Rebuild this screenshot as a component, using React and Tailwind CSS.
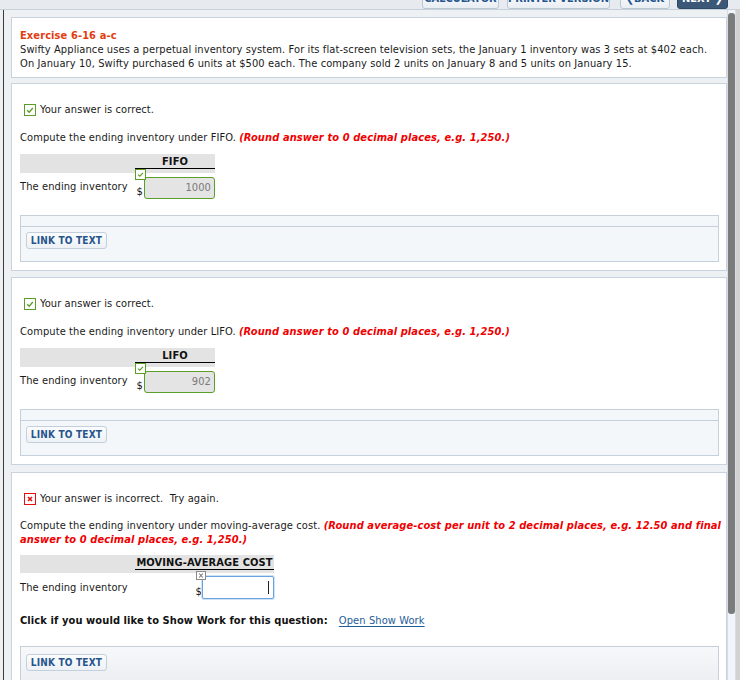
import React from "react";

const FONT = "font-[family-name:'DejaVu_Sans_Condensed','DejaVu_Sans',sans-serif] tracking-[0.1px]";

function StatusOk() {
  return (
    <div className="ml-[4px] flex h-[14px] items-center">
      <span className="flex h-[12px] w-[12px] items-center justify-center border border-[#5a9e28] bg-white">
        <svg width="10" height="10" viewBox="0 0 10 10">
          <path d="M2.2 5.2 L4.2 7.2 L7.8 3" fill="none" stroke="#5a9e28" strokeWidth="1.3" />
        </svg>
      </span>
      <span className="ml-[4px] text-[11px] leading-[14px] text-[#1a1a1a]">Your answer is correct.</span>
    </div>
  );
}

function StatusBad() {
  return (
    <div className="ml-[4px] flex h-[14px] items-center">
      <span className="flex h-[12px] w-[12px] items-center justify-center border border-[#e41010] bg-white">
        <svg width="10" height="10" viewBox="0 0 10 10">
          <path d="M3 3 L7 7 M7 3 L3 7" fill="none" stroke="#e41010" strokeWidth="1.6" />
        </svg>
      </span>
      <span className="ml-[4px] whitespace-pre text-[11px] leading-[14px] text-[#1a1a1a]">Your answer is incorrect.  Try again.</span>
    </div>
  );
}

function LinkButton() {
  return (
    <span className="flex h-[17px] w-[81px] items-center justify-center whitespace-nowrap rounded-[3px] border border-[#c3cfdb] bg-gradient-to-b from-[#fbfcfe] to-[#edf1f5] text-[10px] font-bold tracking-[0.2px] text-[#26548c]">
      LINK TO TEXT
    </span>
  );
}

function LinkBox() {
  return (
    <div className="mt-[16px] mr-[7px] flex flex-col border border-[#c6d0da] bg-[#f4f7fa]">
      <div className="h-[11px] border-b border-[#c6d0da]" />
      <div className="flex h-[34px] items-start pt-[5px] pl-[5px]">
        <LinkButton />
      </div>
    </div>
  );
}

function SmallCheck() {
  return (
    <span className="absolute left-0 top-[-4px] flex h-[11px] w-[11px] items-center justify-center border border-[#5a9e28] bg-white">
      <svg width="9" height="9" viewBox="0 0 9 9">
        <path d="M2 4.6 L3.8 6.2 L7 2.8" fill="none" stroke="#5a9e28" strokeWidth="1.1" />
      </svg>
    </span>
  );
}

function AnswerPanel({ method, value, className }) {
  return (
    <div className={"flex flex-col border border-[#c9d3dd] bg-white pl-[8px] pb-[8px] " + className}>
      <div className="mt-[19px]">
        <StatusOk />
      </div>
      <div className="mt-[14px] whitespace-nowrap text-[11px] leading-[14px] text-[#1a1a1a]">
        Compute the ending inventory under {method}.{" "}
        <span className="font-bold italic text-[#f00000]">(Round answer to 0 decimal places, e.g. 1,250.)</span>
      </div>
      <div className="mt-[9px] flex h-[19px] w-[195px] bg-[#e3e3e3]">
        <div className="w-[115px]" />
        <div className="h-[15px] w-[80px] border-b border-black text-center text-[11px] font-bold leading-[15px] text-[#111]">
          {method}
        </div>
      </div>
      <div className="flex h-[26px] w-[195px]">
        <div className="flex w-[115px] items-center pt-[3px] text-[11px] text-[#1a1a1a]">The ending inventory</div>
        <div className="relative flex w-[80px] items-end justify-end">
          <SmallCheck />
          <span className="mb-[1px] mr-[1px] text-[11px] leading-[12px] text-[#111]">$</span>
          <span className="flex h-[22px] w-[71px] items-center justify-end rounded-[3px] border border-[#5a9e28] bg-[#e4e4e4] pr-[3px] text-[11px] text-[#7a7a7a]">
            {value}
          </span>
        </div>
      </div>
      <LinkBox />
    </div>
  );
}

function TopButton({ children, dark, w }) {
  return (
    <span
      className={
        "flex h-[20px] shrink-0 items-center justify-center whitespace-nowrap rounded-[3px] border text-[11px] font-bold tracking-normal " +
        (dark
          ? "border-[#2f4a66] bg-[#3b5878] text-white "
          : "border-[#b9c7d5] bg-gradient-to-b from-[#ffffff] to-[#e9eef3] text-[#26548c] ") +
        w
      }
    >
      {children}
    </span>
  );
}

export default function App() {
  return (
    <div className={"flex h-[680px] w-[740px] flex-col overflow-hidden bg-[#eef1f4] " + FONT}>
      <div className="flex h-[10px] shrink-0 items-end justify-end gap-[7px] overflow-hidden border-b border-[#c7cfd9] bg-[#e7ebef] pr-[12px]">
        <TopButton w="w-[77px]">CALCULATOR</TopButton>
        <TopButton w="w-[103px] ml-[1px]">PRINTER VERSION</TopButton>
        <TopButton w="w-[50px] ml-[3px]">❮BACK</TopButton>
        <TopButton dark w="w-[51px]">NEXT ❯</TopButton>
      </div>
      <div className="flex min-h-0 flex-1">
        <div className="w-[3px] shrink-0" />
        <div className="w-px shrink-0 bg-[#3a3a3a]" />
        <div className="flex min-w-0 flex-1 flex-col overflow-hidden pl-[7px] pt-[7px]">
          <div className="flex flex-col border border-[#c9d3dd] bg-white px-[8px] pt-[10px] pb-[6px]">
            <div className="text-[11px] font-bold leading-[15px] text-[#e23d10]">Exercise 6-16 a-c</div>
            <div className="whitespace-nowrap text-[11px] leading-[14px] text-[#1a1a1a]">
              Swifty Appliance uses a perpetual inventory system. For its flat-screen television sets, the January 1 inventory was 3 sets at $402 each.
              <br />
              On January 10, Swifty purchased 6 units at $500 each. The company sold 2 units on January 8 and 5 units on January 15.
            </div>
          </div>
          <AnswerPanel method="FIFO" value="1000" className="mt-[5px]" />
          <AnswerPanel method="LIFO" value="902" className="mt-[6px]" />
          <div className="mt-[7px] flex flex-col border border-[#c9d3dd] bg-white pl-[8px]">
            <div className="mt-[19px]">
              <StatusBad />
            </div>
            <div className="mt-[13px] text-[11px] leading-[13.5px] text-[#1a1a1a]">
              <div className="whitespace-nowrap">
                Compute the ending inventory under moving-average cost.{" "}
                <span className="font-bold italic text-[#f00000]">(Round average-cost per unit to 2 decimal places, e.g. 12.50 and final</span>
              </div>
              <div className="whitespace-nowrap font-bold italic text-[#f00000]">answer to 0 decimal places, e.g. 1,250.)</div>
            </div>
            <div className="mt-[9px] flex h-[18px] w-[254px] bg-[#e3e3e3]">
              <div className="w-[115px]" />
              <div className="h-[15px] w-[139px] border-b border-black text-center text-[11px] font-bold leading-[15px] text-[#111]">
                MOVING-AVERAGE COST
              </div>
            </div>
            <div className="flex h-[26px] w-[254px]">
              <div className="flex w-[115px] items-center pt-[4px] text-[11px] text-[#1a1a1a]">The ending inventory</div>
              <div className="flex w-[139px] items-end justify-end">
                <div className="relative flex items-end">
                  <span className="absolute left-0 top-[-5px] flex h-[9px] w-[10px] items-center justify-center border border-[#8a8a8a] bg-white">
                    <svg width="8" height="7" viewBox="0 0 8 7">
                      <path d="M2.2 1.5 L5.8 5.5 M5.8 1.5 L2.2 5.5" fill="none" stroke="#777" strokeWidth="1.1" />
                    </svg>
                  </span>
                  <span className="mb-[1px] text-[11px] leading-[12px] text-[#111]">$</span>
                  <span className="flex h-[23px] w-[72px] items-center justify-end rounded-[2px] border border-[#6aa3df] border-t-dotted bg-white pr-[4px] shadow-[0_0_0_1px_#cfe2f6]">
                    <span className="h-[13px] w-px bg-[#222]" />
                  </span>
                </div>
              </div>
            </div>
            <div className="mt-[15px] flex items-center whitespace-nowrap text-[11px] leading-[14px]">
              <span className="font-bold text-[#111]">Click if you would like to Show Work for this question:</span>
              <span className="ml-[11px] text-[#1f5c99] underline underline-offset-2">Open Show Work</span>
            </div>
            <div className="mt-[18px] mr-[7px] h-[60px] border border-[#c6d0da] bg-gradient-to-b from-[#f6f8fa] to-[#e6e9ec] pl-[5px] pt-[7px]">
              <LinkButton />
            </div>
          </div>
        </div>
        <div className="relative flex w-[13px] shrink-0">
          <div className="w-[9px] border-x border-[#d5dde6] bg-[#f1f5f9]">
            <div className="mx-auto mt-[3px] h-[601px] w-[7px] rounded-[3px] bg-[#7b7b7b]" />
          </div>
          <div className="w-[4px] bg-[#d2d2d2]" />
        </div>
      </div>
    </div>
  );
}
